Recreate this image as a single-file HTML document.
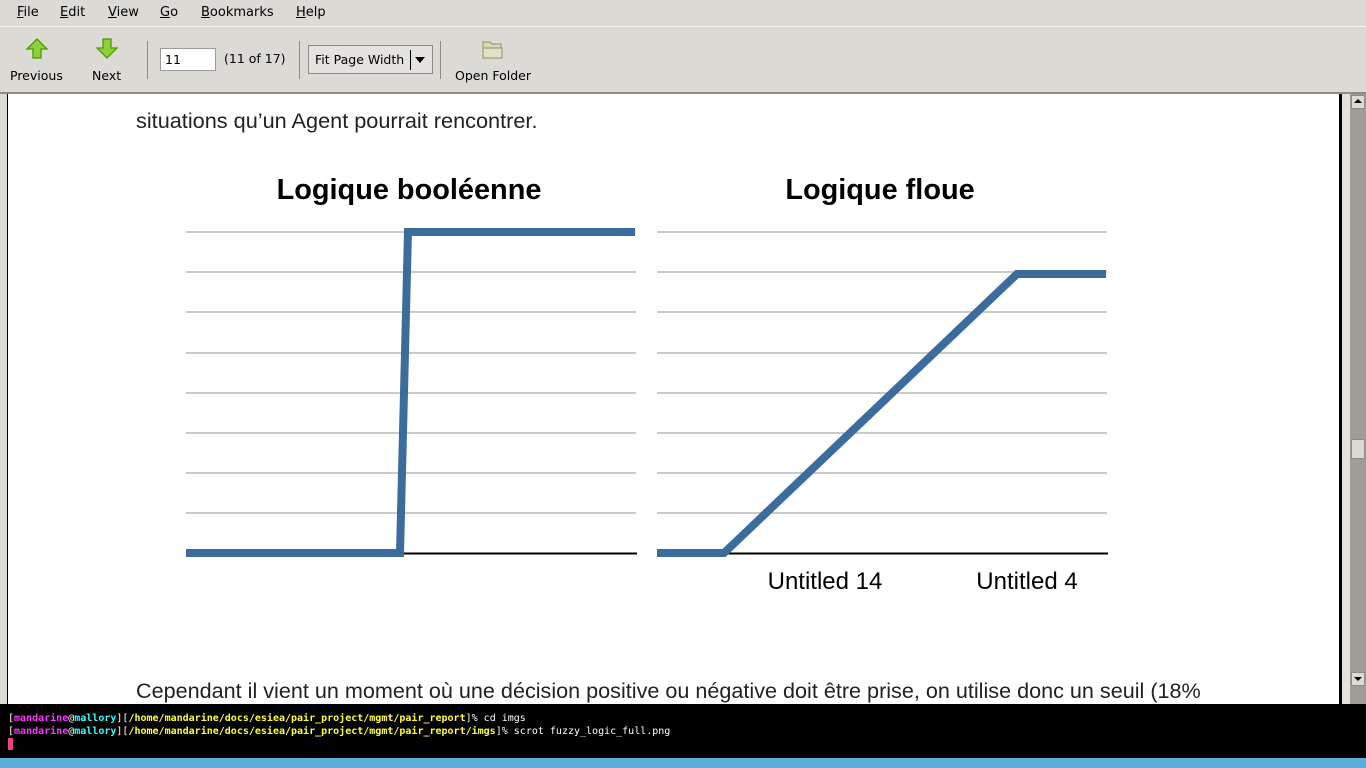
<!DOCTYPE html>
<html><head><meta charset="utf-8"><style>
*{margin:0;padding:0;box-sizing:border-box}
body{width:1366px;height:768px;overflow:hidden;background:#dcdad5;font-family:"DejaVu Sans","Liberation Sans",sans-serif;font-size:13px;color:#000;position:relative}
.abs{position:absolute}
.menu span{position:absolute;top:5px}
.tb{font-size:12.5px;white-space:nowrap}
.sep{position:absolute;width:1px;background:#8e8b85;top:41px;height:38px}
.term{font-family:"DejaVu Sans Mono","Liberation Mono",monospace;font-size:10px;color:#fff;white-space:pre;position:absolute;left:8px;letter-spacing:0px}
.m{color:#ff33ff;font-weight:bold}.c{color:#33ffff;font-weight:bold}.y{color:#ffff33;font-weight:bold}
</style></head><body>
<div class="menu">
<span style="left:17px"><u>F</u>ile</span>
<span style="left:60px"><u>E</u>dit</span>
<span style="left:108px"><u>V</u>iew</span>
<span style="left:160px"><u>G</u>o</span>
<span style="left:201px"><u>B</u>ookmarks</span>
<span style="left:296px"><u>H</u>elp</span>
</div>
<div class="abs" style="left:0;top:26px;width:1366px;height:1px;background:#f4f3f1"></div>
<svg class="abs" style="left:25px;top:38px" width="24" height="22" viewBox="0 0 24 22"><path d="M12 1 L22 11 L16 11 L16 20 L8 20 L8 11 L2 11 Z" fill="#8fd13a" stroke="#4e9a06" stroke-width="1.3"/></svg>
<svg class="abs" style="left:95px;top:38px" width="24" height="22" viewBox="0 0 24 22"><path d="M8 1 L16 1 L16 10 L22 10 L12 20 L2 10 L8 10 Z" fill="#8fd13a" stroke="#4e9a06" stroke-width="1.3"/></svg>
<span class="abs tb" style="left:10px;top:68px">Previous</span>
<span class="abs tb" style="left:92px;top:68px">Next</span>
<div class="sep" style="left:147px"></div>
<div class="abs tb" style="left:160px;top:48px;width:56px;height:23px;background:#fff;border:1px solid #9d9a94;padding:3px 4px">11</div>
<span class="abs tb" style="left:224px;top:51px">(11 of 17)</span>
<div class="sep" style="left:299px"></div>
<div class="abs tb" style="left:308px;top:45px;width:125px;height:29px;background:#e4e2de;border:1px solid #8e8b85;padding:6px 6px">Fit Page Width</div>
<div class="abs" style="left:410px;top:50px;width:1px;height:20px;background:#000"></div>
<div class="abs" style="left:415px;top:57px;width:0;height:0;border-left:5px solid transparent;border-right:5px solid transparent;border-top:6px solid #000"></div>
<div class="sep" style="left:440px"></div>
<svg class="abs" style="left:481px;top:39px" width="24" height="22"><path d="M2 3 H9 L11 5 H20 V19 H2 Z" fill="#d6d8b8" stroke="#8d8f70"/><path d="M2 9 H21 V19 H2 Z" fill="#e0e2c4" stroke="#8d8f70"/></svg>
<span class="abs tb" style="left:455px;top:68px">Open Folder</span>
<div class="abs" style="left:0;top:92px;width:1366px;height:2px;background:#8e8b85"></div>
<!-- content -->
<div class="abs" style="left:7px;top:94px;width:1px;height:610px;background:#000"></div>
<div class="abs" style="left:8px;top:94px;width:1331px;height:610px;background:#fff;overflow:hidden">
<div class="abs" style="left:128px;top:14px;font-family:'Liberation Sans',sans-serif;font-size:21.7px;color:#222;white-space:nowrap">situations qu’un Agent pourrait rencontrer.</div>
<div class="abs" style="left:128px;top:584px;font-family:'Liberation Sans',sans-serif;font-size:21.6px;color:#222;white-space:nowrap">Cependant il vient un moment où une décision positive ou négative doit être prise, on utilise donc un seuil (18%</div>
</div>
<svg class="abs" style="left:0;top:0" width="1366" height="704">
<g stroke="#aaa" stroke-width="1.3">
<path d="M186 232H636M186 272H636M186 312H636M186 353H636M186 393H636M186 433H636M186 473H636M186 513H636"/>
<path d="M657 232H1107M657 272H1107M657 312H1107M657 353H1107M657 393H1107M657 433H1107M657 473H1107M657 513H1107"/>
</g>
<path d="M186 553.5H637M657 553.5H1108" stroke="#000" stroke-width="2"/>
<path d="M186 553 H400 L408 232 H635" fill="none" stroke="#3b6c9d" stroke-width="8"/>
<path d="M657 553 H724 L1017 274 H1106" fill="none" stroke="#3b6c9d" stroke-width="8"/>
<g font-family="Liberation Sans,sans-serif" text-anchor="middle">
<text x="409" y="199" font-size="28.9" font-weight="bold">Logique booléenne</text>
<text x="880" y="199" font-size="28.9" font-weight="bold">Logique floue</text>
<text x="825" y="589" font-size="24">Untitled 14</text>
<text x="1027" y="589" font-size="24">Untitled 4</text>
</g>
</svg>
<div class="abs" style="left:1339px;top:94px;width:3px;height:610px;background:#000"></div>
<div class="abs" style="left:1342px;top:94px;width:8px;height:610px;background:#e4e2de"></div>
<div class="abs" style="left:1350px;top:94px;width:16px;height:610px;background:#a19d96"></div>
<div class="abs" style="left:1351px;top:95px;width:14px;height:14px;background:#dcdad5;border:1px solid #8e8b85"></div>
<div class="abs" style="left:1354px;top:99px;border-left:4px solid transparent;border-right:4px solid transparent;border-bottom:4px solid #000"></div>
<div class="abs" style="left:1351px;top:439px;width:14px;height:20px;background:#dcdad5;border:1px solid #8e8b85"></div>
<div class="abs" style="left:1351px;top:672px;width:14px;height:14px;background:#dcdad5;border:1px solid #8e8b85"></div>
<div class="abs" style="left:1354px;top:677px;border-left:4px solid transparent;border-right:4px solid transparent;border-top:4px solid #000"></div>
<!-- terminal -->
<div class="abs" style="left:0;top:704px;width:1366px;height:54px;background:#000"></div>
<div class="term" style="top:713px">[<span class="m">mandarine</span>@<span class="c">mallory</span>][<span class="y">/home/mandarine/docs/esiea/pair_project/mgmt/pair_report</span>]% cd imgs</div>
<div class="term" style="top:726px">[<span class="m">mandarine</span>@<span class="c">mallory</span>][<span class="y">/home/mandarine/docs/esiea/pair_project/mgmt/pair_report/imgs</span>]% scrot fuzzy_logic_full.png</div>
<div class="abs" style="left:8px;top:738px;width:5px;height:12px;background:#e8428c"></div>
<div class="abs" style="left:0;top:758px;width:1366px;height:10px;background:#5aaedc"></div>
</body></html>
